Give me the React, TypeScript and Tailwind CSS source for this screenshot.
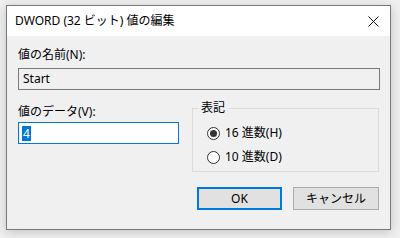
import React from 'react';

const font = { fontFamily: '"Noto Sans", "Noto Sans CJK JP", sans-serif' };

function Radio({ checked, label }: { checked?: boolean; label: string }) {
  return (
    <div className="flex items-center h-[16px]">
      <div className="w-[13px] h-[13px] rounded-full border border-[#333] bg-white flex items-center justify-center">
        {checked && <div className="w-[7px] h-[7px] rounded-full bg-[#333]" />}
      </div>
      <span className="ml-[5px] text-[12px] leading-[16px] text-black">{label}</span>
    </div>
  );
}

export default function App() {
  return (
    <div className="w-[400px] h-[238px] bg-[#efefef] pt-[5px] pl-[6px]" style={font}>
      <div className="w-[385px] h-[225px] border border-[#787878] bg-[#f0f0f0] shadow-[0_2px_10px_rgba(0,0,0,0.18)] flex flex-col">
        {/* タイトルバー */}
        <div className="h-[30px] bg-white flex items-center justify-between pl-[8px] pr-[11px]">
          <span className="text-[12px] text-black">DWORD (32 ビット) 値の編集</span>
          <svg width="11" height="11" viewBox="0 0 11 11">
            <path d="M0.5 0.5 L10.5 10.5 M10.5 0.5 L0.5 10.5" stroke="#111" strokeWidth="1" />
          </svg>
        </div>

        <div className="flex-1 pl-[11px] pr-[10px]">
          <div className="mt-[11px] text-[12px] leading-[16px] text-black">値の名前(N):</div>
          <div className="mt-[5px] h-[22px] border border-[#7a7a7a] bg-[#f0f0f0] flex items-center pl-[4px] text-[12px] text-black">
            Start
          </div>

          <div className="flex mt-[12px]">
            <div className="w-[161px]">
              <div className="mt-[2px] text-[12px] leading-[16px] text-black">値のデータ(V):</div>
              <div className="mt-[2px] h-[22px] border border-[#0078d7] bg-white flex items-center pl-[3px]">
                <span className="bg-[#0078d7] text-white text-[12px] leading-[15px] px-[1px]">4</span>
              </div>
            </div>

            <fieldset className="ml-[13px] w-[187px] h-[71px] border border-[#dcdcdc] p-0 -mt-[1px]">
              <legend className="ml-[5px] px-[3px] text-[12px] leading-[14px] text-black">表記</legend>
              <div className="flex flex-col gap-[8px] pl-[14px] pt-[10px]">
                <Radio checked label="16 進数(H)" />
                <Radio label="10 進数(D)" />
              </div>
            </fieldset>
          </div>

          <div className="flex mt-[15px] ml-[179px] gap-[11px]">
            <button className="w-[85px] h-[23px] border-2 border-[#0078d7] bg-[#e1e1e1] text-[12px] text-black">OK</button>
            <button className="w-[86px] h-[23px] border border-[#adadad] bg-[#e1e1e1] text-[12px] text-black">キャンセル</button>
          </div>
        </div>
      </div>
    </div>
  );
}
